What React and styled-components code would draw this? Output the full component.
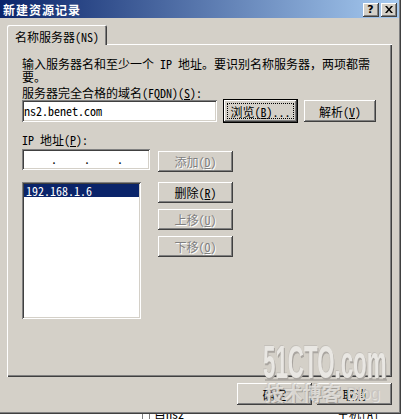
import styled, { createGlobalStyle } from 'styled-components';

const FONT = `"Noto Sans Mono CJK SC", "Noto Sans CJK SC", "DejaVu Sans", sans-serif`;

const GlobalStyle = createGlobalStyle`
  html, body {
    margin: 0;
    padding: 0;
    background: #ffffff;
  }
  body {
    font-family: ${FONT};
    font-size: 12px;
  }
`;

const raised = `inset -1px -1px #404040, inset 1px 1px #ffffff, inset -2px -2px #808080`;
const sunken = `inset 1px 1px #808080, inset -1px -1px #ffffff, inset 2px 2px #404040, inset -2px -2px #d4d0c8`;

const Window = styled.div`
  position: relative;
  width: 401px;
  height: 414px;
  box-sizing: border-box;
  padding-right: 2px;
  background: #d4d0c8;
  box-shadow: inset -1px -1px #404040, inset -2px -2px #808080;
  font-family: ${FONT};
  font-size: 12px;
  color: #000;
  overflow: hidden;
`;

const TitleBar = styled.div`
  height: 18px;
  display: flex;
  align-items: flex-start;
  padding-left: 3px;
  background: linear-gradient(to right, #0a246a, #a6caf0);
`;

const Title = styled.div`
  flex: 1;
  color: #fff;
  font-family: "Noto Sans CJK SC", sans-serif;
  font-weight: 700;
  font-size: 12px;
  line-height: 19px;
  letter-spacing: 1px;
`;

const TitleButtons = styled.div`
  display: flex;
  gap: 2px;
  margin-top: 3px;
  margin-right: 2px;
`;

const TitleButton = styled.div`
  width: 16px;
  height: 14px;
  box-sizing: border-box;
  background: #d4d0c8;
  box-shadow: ${raised};
  display: flex;
  align-items: center;
  justify-content: center;
  padding: 0 1px 1px 0;
  font-family: "DejaVu Sans", sans-serif;
  font-weight: 700;
  font-size: 11px;
  line-height: 1;
`;

const Body = styled.div`
  padding: 7px 0 0 7px;
`;

const TabStrip = styled.div`
  display: flex;
  height: 19px;
`;

const Tab = styled.div`
  position: relative;
  z-index: 1;
  width: 100px;
  height: 20px;
  box-sizing: border-box;
  padding: 5px 0 0 8px;
  line-height: 13px;
  background: #d4d0c8;
  border-radius: 2px 2px 0 0;
  box-shadow: inset 1px 1px #ffffff, inset -1px 0 #404040, inset -2px 0 #808080;
`;

const Panel = styled.div`
  width: 385px;
  height: 333px;
  box-sizing: border-box;
  padding: 13px 0 0 15px;
  background: #d4d0c8;
  box-shadow: inset 1px 1px #ffffff, inset -1px -1px #404040, inset -2px -2px #808080;
`;

const Text = styled.div`
  line-height: 13px;
  margin-top: ${(p) => p.$mt || 0}px;
  white-space: nowrap;
`;

const Row = styled.div`
  display: flex;
  align-items: center;
  height: 22px;
  margin-top: 1px;
`;

const Field = styled.div`
  width: ${(p) => p.$w}px;
  height: ${(p) => p.$h}px;
  box-sizing: border-box;
  padding-left: 2px;
  background: #fff;
  box-shadow: ${sunken};
  line-height: ${(p) => p.$h}px;
  white-space: nowrap;
`;

const Button = styled.button`
  position: relative;
  flex: none;
  width: ${(p) => p.$w || 75}px;
  height: ${(p) => p.$h || 21}px;
  margin: ${(p) => p.$m || '0'};
  padding: 0;
  border: 0;
  background: #d4d0c8;
  font-family: ${FONT};
  font-size: 12px;
  line-height: 13px;
  color: ${(p) => (p.disabled ? '#808080' : '#000')};
  text-shadow: ${(p) => (p.disabled ? '1px 1px #ffffff' : 'none')};
  box-shadow: ${(p) =>
    p.$default
      ? 'inset 0 0 0 1px #000, inset -2px -2px #404040, inset 2px 2px #ffffff, inset -3px -3px #808080'
      : raised};

  ${(p) =>
    p.$default &&
    `
    &::after {
      content: '';
      position: absolute;
      inset: 4px;
      border: 1px dotted #000;
    }
  `}

  u {
    text-decoration: underline;
    text-underline-offset: 1px;
  }
`;

const IpField = styled(Field)`
  display: flex;
  gap: 30px;
  padding-left: 29px;
`;

const Dot = styled.span`
  width: 3px;
  text-align: center;
  line-height: 19px;
`;

const IpSection = styled.div`
  display: flex;
  gap: 8px;
  margin-top: 3px;
`;

const LeftCol = styled.div`
  width: 128px;
  display: flex;
  flex-direction: column;
`;

const RightCol = styled.div`
  display: flex;
  flex-direction: column;
  padding-top: 2px;
`;

const List = styled.div`
  width: 119px;
  height: 137px;
  margin-top: 12px;
  box-sizing: border-box;
  padding: 2px;
  background: #fff;
  box-shadow: ${sunken};
`;

const ListItem = styled.div`
  height: 13px;
  line-height: 13px;
  padding-left: 2px;
  background: ${(p) => (p.$selected ? '#0a246a' : 'transparent')};
  color: ${(p) => (p.$selected ? '#fff' : '#000')};
`;

const Footer = styled.div`
  display: flex;
  justify-content: flex-end;
  gap: 5px;
  margin-top: 6px;
  padding-right: 7px;
`;

/* 51CTO watermark stamped over the dialog corner */
const Watermark = styled.div`
  position: absolute;
  left: 263px;
  top: 339px;
  width: 130px;
  pointer-events: none;
`;

const WmBig = styled.div`
  height: 46px;
  font-family: "Liberation Sans", sans-serif;
  font-weight: 700;
  font-size: 46px;
  line-height: 46px;
  color: #e9e7e3;
  transform: scaleX(0.485);
  transform-origin: left top;
  white-space: nowrap;
  text-shadow: 2px 2px 0 #a9a5a0, -1px -1px 0 #c4c0ba;
`;

const WmLine = styled.div`
  height: 2px;
  width: 122px;
  margin: -6px 0 0 2px;
  background: #b4b0aa;
`;

const WmRow = styled.div`
  display: flex;
  align-items: flex-end;
  gap: 5px;
  margin: 1px 0 0 2px;
`;

const WmCn = styled.div`
  font-family: "Noto Sans CJK SC", sans-serif;
  font-weight: 700;
  font-size: 19px;
  line-height: 22px;
  color: rgba(236, 234, 230, 0.75);
  text-shadow: 1px 1px 0 rgba(150, 146, 140, 0.8), -1px -1px 0 rgba(190, 186, 180, 0.6);
`;

const WmBlog = styled.div`
  font-family: "Liberation Sans", sans-serif;
  font-size: 17px;
  line-height: 20px;
  color: #c9c6c1;
  text-shadow: 1px 1px 0 #e6e4e0;
`;

const BehindStrip = styled.div`
  position: relative;
  height: 5px;
  display: flex;
  overflow: hidden;
  background: #fff;
  font-family: ${FONT};
  font-size: 12px;
`;

const BehindGap = styled.div`
  width: 142px;
`;

const BehindBars = styled.div`
  width: 6px;
  border-left: 1px solid #808080;
  border-right: 1px solid #808080;
  margin-right: 4px;
`;

const BehindText = styled.div`
  width: ${(p) => p.$w}px;
  line-height: 12px;
  margin-top: -6px;
`;

function X() {
  return (
    <svg width="8" height="7" viewBox="0 0 8 7">
      <path d="M0 0h2l2 2.5L6 0h2L5 3.5 8 7H6L4 4.5 2 7H0l3-3.5z" fill="#000" />
    </svg>
  );
}

export default function App() {
  return (
    <>
      <GlobalStyle />
      <Window>
        <TitleBar>
          <Title>新建资源记录</Title>
          <TitleButtons>
            <TitleButton>?</TitleButton>
            <TitleButton>
              <X />
            </TitleButton>
          </TitleButtons>
        </TitleBar>
        <Body>
          <TabStrip>
            <Tab>名称服务器(NS)</Tab>
          </TabStrip>
          <Panel>
            <Text>输入服务器名和至少一个 IP 地址。要识别名称服务器，两项都需</Text>
            <Text>要。</Text>
            <Text $mt={3}>
              服务器完全合格的域名(FQDN)(<u>S</u>):
            </Text>
            <Row>
              <Field $w={195} $h={22}>ns2.benet.com</Field>
              <Button $default $w={75} $h={24} $m="0 0 0 6px">
                浏览(<u>B</u>)...
              </Button>
              <Button $w={72} $h={22} $m="0 0 0 6px">
                解析(<u>V</u>)
              </Button>
            </Row>
            <Text $mt={11}>
              IP 地址(<u>P</u>):
            </Text>
            <IpSection>
              <LeftCol>
                <IpField $w={128} $h={21}>
                  <Dot>.</Dot>
                  <Dot>.</Dot>
                  <Dot>.</Dot>
                </IpField>
                <List>
                  <ListItem $selected>192.168.1.6</ListItem>
                </List>
              </LeftCol>
              <RightCol>
                <Button disabled>
                  添加(<u>D</u>)
                </Button>
                <Button $m="10px 0 0 0">
                  删除(<u>R</u>)
                </Button>
                <Button disabled $m="6px 0 0 0">
                  上移(<u>U</u>)
                </Button>
                <Button disabled $m="6px 0 0 0">
                  下移(<u>O</u>)
                </Button>
              </RightCol>
            </IpSection>
          </Panel>
          <Footer>
            <Button $w={75} $h={22}>确定</Button>
            <Button $w={75} $h={22}>取消</Button>
          </Footer>
        </Body>
        <Watermark>
          <WmBig>51CTO.com</WmBig>
          <WmLine />
          <WmRow>
            <WmCn>技术博客</WmCn>
            <WmBlog>Blog</WmBlog>
          </WmRow>
        </Watermark>
      </Window>
      <BehindStrip>
        <BehindGap />
        <BehindBars />
        <BehindText $w={183}>目ns2</BehindText>
        <BehindText $w={60}>主机[A]</BehindText>
      </BehindStrip>
    </>
  );
}
